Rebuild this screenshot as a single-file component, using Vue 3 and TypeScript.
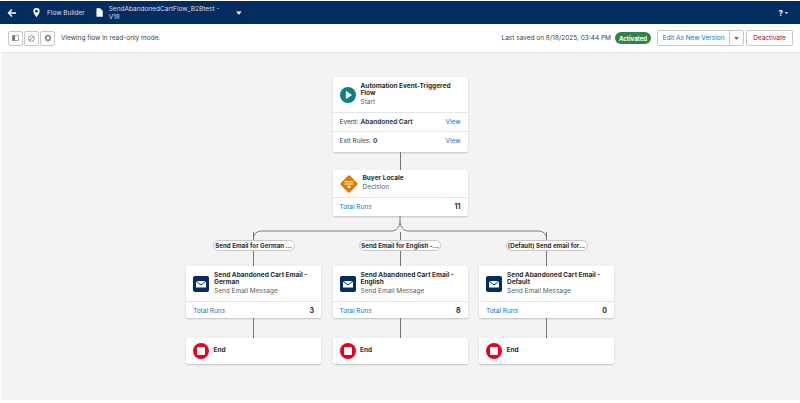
<script setup lang="ts">
interface Branch { label: string; title: string; sub: string; runs: number }
const branches: Branch[] = [
  { label: 'Send Email for German ...', title: 'Send Abandoned Cart Email - German', sub: 'Send Email Message', runs: 3 },
  { label: 'Send Email for English -...', title: 'Send Abandoned Cart Email - English', sub: 'Send Email Message', runs: 8 },
  { label: '(Default) Send email for...', title: 'Send Abandoned Cart Email - Default', sub: 'Send Email Message', runs: 0 },
]
</script>

<template>
  <div class="page">
    <header class="topbar">
      <div class="seg back">
        <svg width="10" height="10" viewBox="0 0 10 10"><path d="M9 5H2M5 1.5 1.5 5 5 8.5" fill="none" stroke="#fff" stroke-width="1.4"/></svg>
      </div>
      <div class="seg builder">
        <svg width="7" height="9" viewBox="0 0 7 9"><path fill-rule="evenodd" d="M3.5 0A3.2 3.2 0 0 0 .3 3.2C.3 5.3 3.5 9 3.5 9s3.2-3.7 3.2-5.8A3.2 3.2 0 0 0 3.5 0Zm0 4.6a1.4 1.4 0 1 1 0-2.8 1.4 1.4 0 0 1 0 2.8Z" fill="#fff"/></svg>
        <span>Flow Builder</span>
      </div>
      <div class="seg file">
        <svg width="7" height="9" viewBox="0 0 7 9"><path d="M.5 0h3.8L7 2.7V9H.5z" fill="#fff"/></svg>
        <span>SendAbandonedCartFlow_B2Btest - V18</span>
        <svg class="caret" width="6" height="4" viewBox="0 0 6 4"><path d="M0 .5h6L3 3.7z" fill="#fff"/></svg>
      </div>
      <div class="help">
        <span>?</span>
        <svg width="3" height="2" viewBox="0 0 3 2"><path d="M0 0h3L1.500 2z" fill="#fff"/></svg>
      </div>
    </header>

    <div class="toolbar">
      <div class="tools">
        <button class="tool">
          <svg width="7" height="6" viewBox="0 0 7 6"><rect x=".4" y=".4" width="6.2" height="5.2" rx=".6" fill="none" stroke="#777" stroke-width=".7"/><rect x=".4" y=".4" width="2.600" height="5.2" fill="#777"/></svg>
        </button>
        <button class="tool">
          <svg width="7" height="7" viewBox="0 0 7 7"><circle cx="3.5" cy="3.5" r="2.900" fill="none" stroke="#777" stroke-width=".8"/><path d="M1.500 5.500 5.500 1.500" stroke="#777" stroke-width=".8"/></svg>
        </button>
        <button class="tool">
          <svg width="8" height="8" viewBox="0 0 8 8"><circle cx="4" cy="4" r="2.200" fill="none" stroke="#777" stroke-width="1.300"/><path d="M4 .4v1.300M4 6.300v1.300M.4 4h1.300M6.300 4h1.300M1.500 1.500l.9.9M5.600 5.600l.9.9M1.500 6.500l.9-.9M5.600 2.400l.9-.9" stroke="#777" stroke-width=".9"/></svg>
        </button>
        <span class="readonly">Viewing flow in read-only mode.</span>
      </div>
      <div class="status">
        <span class="saved">Last saved on 8/18/2025, 03:44 PM</span>
        <span class="badge">Activated</span>
        <div class="group">
          <button class="btn edit">Edit As New Version</button>
          <button class="btn more">
            <svg width="5" height="3" viewBox="0 0 5 3"><path d="M0 0h5L2.500 3z" fill="#706e6b"/></svg>
          </button>
        </div>
        <button class="btn deact">Deactivate</button>
      </div>
    </div>

    <main class="canvas">
      <section class="card start">
        <div class="head">
          <span class="icon round">
            <svg width="16" height="16" viewBox="0 0 16 16"><circle cx="8" cy="8" r="8" fill="#0b827c"/><path d="M5.800 3.800 12 8l-6.200 4.200z" fill="#fff"/></svg>
          </span>
          <div class="meta">
            <div class="title">Automation Event-Triggered Flow</div>
            <div class="sub">Start</div>
          </div>
        </div>
        <div class="row split"><span>Event: <b>Abandoned Cart</b></span><span class="link">View</span></div>
        <div class="row split"><span>Exit Rules: <b>0</b></span><span class="link">View</span></div>
      </section>
      <div class="line l18"></div>
      <section class="card decision">
        <div class="head short">
          <span class="icon diamond">
            <svg width="20" height="20" viewBox="0 0 20 20"><rect x="3.500" y="3.500" width="13" height="13" rx="1.500" transform="rotate(45 10 10)" fill="#dd7a01"/><path d="M5.500 7.700h9M5.500 10h9M8 12.800h4M10 11.500v2.700" stroke="#fff" stroke-width="1"/></svg>
          </span>
          <div class="meta">
            <div class="title">Buyer Locale</div>
            <div class="sub">Decision</div>
          </div>
        </div>
        <div class="row runs"><span class="link">Total Runs</span><b class="count">11</b></div>
      </section>

      <div class="tree">
        <svg class="wires" width="295" height="16" viewBox="0 0 295 16">
          <path d="M147 0V6C147 11 143 15 139 15H75" fill="none" stroke="#7a7a7a" stroke-width="1"/>
          <path d="M147 6C147 11 151 15 155 15H285C290 15 293.500 18 293.500 22" fill="none" stroke="#7a7a7a" stroke-width="1"/>
          <path d="M75 15H9C4 15 .5 18 .5 22" fill="none" stroke="#7a7a7a" stroke-width="1"/>
        </svg>
        <div class="branches">
          <div v-for="b in branches" :key="b.label" class="branch">
            <div class="line l9"></div>
            <span class="pill">{{ b.label }}</span>
            <div class="line l15"></div>
            <section class="card action">
              <div class="head">
                <span class="icon mail">
                  <svg width="16" height="16" viewBox="0 0 16 16"><rect width="16" height="16" rx="2" fill="#032d60"/><path d="M3 5h10v6.500H3z" fill="#fff"/><path d="M3 5l5 4 5-4" fill="none" stroke="#032d60" stroke-width="1"/></svg>
                </span>
                <div class="meta">
                  <div class="title">{{ b.title }}</div>
                  <div class="sub">{{ b.sub }}</div>
                </div>
              </div>
              <div class="row runs"><span class="link">Total Runs</span><b class="count">{{ b.runs }}</b></div>
            </section>
            <div class="line l20"></div>
            <section class="card end">
              <span class="icon stop">
                <svg width="16" height="16" viewBox="0 0 16 16"><circle cx="8" cy="8" r="8" fill="#ea001e"/><rect x="4" y="4" width="8" height="8" rx="1" fill="#fff"/></svg>
              </span>
              <span class="title">End</span>
            </section>
          </div>
        </div>
      </div>
    </main>
  </div>
</template>

<style>
html, body { margin: 0; background: #fff; }
</style>

<style scoped>
.page {
  width: 800px; height: 403px; display: flex; flex-direction: column; overflow: hidden;
  font-family: "Inter", "Liberation Sans", sans-serif; font-size: 6.5px; color: #3e3e3c; background: #fff;
}
.topbar { height: 23px; margin-top: 1px; background: #032d60; display: flex; align-items: stretch; color: #d8dde6; flex: none; }
.seg { display: flex; align-items: center; border-right: 1px solid #0a2650; }
.back { width: 23px; justify-content: center; }
.builder { width: 63px; padding-left: 9px; gap: 7px; box-sizing: border-box; }
.file { width: 156px; padding-left: 9px; gap: 6px; box-sizing: border-box; }
.caret { margin-left: 3px; }
.help { margin-left: auto; margin-right: 12px; display: flex; align-items: center; gap: 2px; color: #fff; font-size: 8px; font-weight: 700; }
.toolbar { height: 28px; flex: none; display: flex; align-items: center; justify-content: space-between; padding: 0 7px 0 8px; background: #fff; box-sizing: border-box; }
.tools { display: flex; align-items: center; gap: 1px; }
.tool { width: 15px; height: 15px; padding: 0; border: 1px solid #c9c7c5; border-radius: 2px; background: #fff; display: flex; align-items: center; justify-content: center; }
.readonly { margin-left: 5px; color: #444; }
.status { display: flex; align-items: center; }
.saved { color: #444; }
.badge { margin-left: 4px; width: 36px; height: 12px; border-radius: 6px; background: #2e844a; color: #fff; font-weight: 700; font-size: 6px; display: flex; align-items: center; justify-content: center; }
.group { display: flex; margin-left: 6px; }
.btn { height: 16px; padding: 0; background: #fff; border: 1px solid #c9c7c5; font: inherit; border-radius: 2px; box-sizing: border-box; }
.edit { width: 73px; color: #0176d3; border-radius: 2px 0 0 2px; }
.more { width: 15px; margin-left: -1px; border-radius: 0 2px 2px 0; display: flex; align-items: center; justify-content: center; }
.deact { width: 47px; margin-left: 2px; color: #ba0517; }
.canvas { flex: 1; margin: 0 0 3px 1px; padding-top: 24px; background: #f3f3f3; border-top: 1px solid #e5e5e5; display: flex; flex-direction: column; align-items: center; position: relative; left: -.5px; }
.card { width: 135px; box-sizing: border-box; background: #fff; border-radius: 2px; box-shadow: 0 1px 2px rgba(0,0,0,.2); flex: none; }
.head { display: flex; align-items: center; gap: 5px; padding: 0 7px; height: 35px; }
.head.short { height: 27px; padding-left: 6px; gap: 4px; }
.action .head { height: 35px; }
.icon { flex: none; display: flex; }
.meta { min-width: 0; flex: 1; }
.title { font-weight: 700; line-height: 7.5px; color: #2b2b2b; }
.sub { color: #5c5c5c; line-height: 9px; }
.row { display: flex; align-items: center; justify-content: space-between; padding: 0 7px; border-top: 1px solid #e5e5e5; box-sizing: border-box; }
.split { height: 19px; }
.link { color: #0176d3; }
.runs { height: 18px; }
.count { color: #2b2b2b; font-size: 7px; }
.start { height: 75px; }
.decision { height: 46px; }
.line { width: 1px; background: #747474; flex: none; }
.l18 { height: 18px; }
.tree { display: flex; flex-direction: column; align-items: center; }
.wires { display: block; flex: none; margin-left: 1px; height: 16px; overflow: visible; }
.branches { display: flex; gap: 11.500px; margin-top: 0; }
.branch { width: 135px; display: flex; flex-direction: column; align-items: center; }
.l9 { height: 8px; }
.pill { height: 11px; width: 82px; box-sizing: border-box; border: 1px solid #c9c7c5; border-radius: 6px; background: #fff; font-weight: 700; font-size: 6.2px; color: #2b2b2b; white-space: nowrap; display: flex; align-items: center; justify-content: center; }
.l15 { height: 15px; }
.l20 { height: 20px; }
.action { height: 52px; }
.end { height: 26px; display: flex; align-items: center; gap: 4.500px; padding-left: 7px; }
</style>
